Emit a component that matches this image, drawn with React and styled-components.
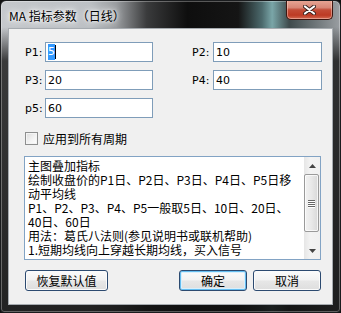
import styled, { createGlobalStyle } from "styled-components";

const cjk = `"Noto Sans CJK SC", "DejaVu Sans", sans-serif`;
const latin = `"DejaVu Sans", "Noto Sans CJK SC", sans-serif`;

const GlobalStyle = createGlobalStyle`
  html, body {
    margin: 0;
    padding: 0;
    background: #111;
  }
  * {
    box-sizing: border-box;
  }
`;

// Aero glass frame
const Window = styled.div`
  width: 341px;
  height: 313px;
  display: flex;
  flex-direction: column;
  padding: 0 7px 7px 7px;
  border: 1px solid #1a1c1e;
  border-radius: 6px 6px 4px 4px;
  box-shadow: inset 0 0 0 1px rgba(255, 255, 255, 0.3);
  background:
    linear-gradient(180deg, rgba(0, 0, 0, 0) 0, rgba(0, 0, 0, 0) 26px, rgba(22, 22, 22, 0.8) 60px, rgba(16, 16, 16, 0.9) 100%),
    linear-gradient(90deg, #c5c8cc 0%, #bcc0c4 26%, #9a9da0 34%, #3a3b3c 43%, #0e0e0e 55%, #151515 70%, #4c6a6d 77%, #7aa6a8 80%, #3e4a4c 85%, #9a9ea2 100%);
  overflow: hidden;
`;

const TitleBar = styled.div`
  height: 28px;
  flex: none;
  display: flex;
  align-items: flex-start;
  justify-content: space-between;
  margin-top: -1px;
`;

const Title = styled.div`
  padding: 8px 0 0 1px;
  font-family: ${cjk};
  font-size: 12px;
  line-height: 15px;
  color: #000;
  text-shadow: 0 0 6px #fff, 0 0 3px #fff, 0 0 10px rgba(255, 255, 255, 0.9);
`;

const CloseButton = styled.div`
  width: 47px;
  height: 20px;
  display: flex;
  align-items: center;
  justify-content: center;
  border: 1px solid #3e1610;
  border-top: none;
  border-radius: 0 0 5px 5px;
  background: linear-gradient(180deg, #e9a898 0%, #d88776 40%, #c34c37 52%, #bd3a24 80%, #d36a52 100%);
  box-shadow: inset 0 0 0 1px rgba(255, 220, 210, 0.45);
`;

const Client = styled.div`
  flex: 1;
  display: flex;
  flex-direction: column;
  background: #f0f0f0;
  border: 1px solid #a6abb0;
  padding: 13px 0 0 16px;
  font-family: ${cjk};
  font-size: 12px;
  color: #000;
`;

const Fields = styled.div`
  display: grid;
  grid-template-columns: 167px 130px;
  row-gap: 8px;
`;

const Field = styled.div`
  display: flex;
  align-items: center;
`;

const Label = styled.label`
  width: ${(p) => p.$w}px;
  flex: none;
  font-family: ${latin};
  font-size: 11px;
`;

const Input = styled.div`
  width: ${(p) => p.$w}px;
  height: 20px;
  display: flex;
  align-items: center;
  padding-left: 2px;
  background: #fff;
  border: 1px solid #7f9db9;
  font-family: ${latin};
  font-size: 11px;
`;

const Selected = styled.span`
  background: #3399ff;
  color: #fff;
  padding: 1px 0;
  line-height: 14px;
`;

const Caret = styled.span`
  width: 1px;
  height: 14px;
  background: #000;
`;

const CheckRow = styled.div`
  display: flex;
  align-items: center;
  gap: 5px;
  margin-top: 13px;
  height: 14px;
`;

const Checkbox = styled.span`
  width: 13px;
  height: 13px;
  border: 1px solid #8e8f8f;
  background: linear-gradient(135deg, #dcdcdc 0%, #f4f4f4 60%, #fff 100%);
  box-shadow: inset 0 0 0 1px #f4f4f4;
`;

const Memo = styled.div`
  margin: 11px 0 0 -1px;
  width: 297px;
  height: 104px;
  display: flex;
  background: #fff;
  border: 1px solid #82a3c4;
`;

const MemoText = styled.div`
  flex: 1;
  padding: 2px 0 0 3px;
  line-height: 14px;
  white-space: nowrap;
  overflow: hidden;
`;

const ScrollBar = styled.div`
  width: 16px;
  flex: none;
  display: flex;
  flex-direction: column;
  background: linear-gradient(90deg, #e6e6e6, #f3f3f3 40%, #f0f0f0);
`;

const Arrow = styled.div`
  height: 17px;
  flex: none;
  display: flex;
  align-items: center;
  justify-content: center;
`;

const Thumb = styled.div`
  margin: 0 1px 0 0;
  height: 58px;
  display: flex;
  flex-direction: column;
  align-items: center;
  justify-content: center;
  gap: 1px;
  border: 1px solid #9a9a9a;
  border-radius: 2px;
  background: linear-gradient(90deg, #f2f2f2 0%, #e8e8e8 50%, #d8d8d8 100%);
  box-shadow: inset 0 0 0 1px rgba(255, 255, 255, 0.7);
`;

const Grip = styled.span`
  width: 7px;
  height: 1px;
  background: #666;
  box-shadow: 0 1px 0 #fff;
`;

const Track = styled.div`
  flex: 1;
`;

const ButtonRow = styled.div`
  display: flex;
  justify-content: space-between;
  width: 296px;
  margin-top: 10px;
`;

const ButtonGroup = styled.div`
  display: flex;
  gap: 6px;
`;

const Button = styled.button`
  width: ${(p) => p.$w}px;
  height: 21px;
  padding: 0;
  border: 1px solid #2c4a70;
  border-radius: 3px;
  background: linear-gradient(180deg, #fbfbfb 0%, #f2f2f2 48%, #e7e7e7 52%, #dedede 100%);
  box-shadow: ${(p) =>
    p.$default ? "inset 0 0 0 1px #64bdf0, inset 0 0 0 2px #d9effb" : "inset 0 0 0 1px #fbfbfb"};
  font-family: ${cjk};
  font-size: 12px;
  line-height: 19px;
  color: #000;
`;

const ArrowIcon = ({ down }) => (
  <svg width="7" height="4" viewBox="0 0 7 4">
    <path d={down ? "M0 0H7L3.5 4Z" : "M0 4H7L3.5 0Z"} fill="#444" />
  </svg>
);

const lines = [
  "主图叠加指标",
  "绘制收盘价的P1日、P2日、P3日、P4日、P5日移",
  "动平均线",
  "P1、P2、P3、P4、P5一般取5日、10日、20日、",
  "40日、60日",
  "用法：葛氏八法则(参见说明书或联机帮助)",
  "1.短期均线向上穿越长期均线，买入信号",
];

export default function App() {
  return (
    <>
      <GlobalStyle />
      <Window>
        <TitleBar>
          <Title>MA 指标参数（日线）</Title>
          <CloseButton>
            <svg width="13" height="10" viewBox="0 0 13 10">
              <path d="M2 1.5L11 8.5M11 1.5L2 8.5" stroke="#3b2420" strokeWidth="4" strokeLinecap="round" />
              <path d="M2 1.5L11 8.5M11 1.5L2 8.5" stroke="#fff" strokeWidth="2.2" strokeLinecap="round" />
            </svg>
          </CloseButton>
        </TitleBar>
        <Client>
          <Fields>
            <Field>
              <Label $w={20}>P1:</Label>
              <Input $w={108}>
                <Selected>5</Selected>
                <Caret />
              </Input>
            </Field>
            <Field>
              <Label $w={21}>P2:</Label>
              <Input $w={109}>10</Input>
            </Field>
            <Field>
              <Label $w={20}>P3:</Label>
              <Input $w={108}>20</Input>
            </Field>
            <Field>
              <Label $w={21}>P4:</Label>
              <Input $w={109}>40</Input>
            </Field>
            <Field>
              <Label $w={20}>p5:</Label>
              <Input $w={108}>60</Input>
            </Field>
          </Fields>
          <CheckRow>
            <Checkbox />
            <span>应用到所有周期</span>
          </CheckRow>
          <Memo>
            <MemoText>
              {lines.map((l) => (
                <div key={l}>{l}</div>
              ))}
            </MemoText>
            <ScrollBar>
              <Arrow>
                <ArrowIcon />
              </Arrow>
              <Thumb>
                <Grip />
                <Grip />
                <Grip />
                <Grip />
              </Thumb>
              <Track />
              <Arrow>
                <ArrowIcon down />
              </Arrow>
            </ScrollBar>
          </Memo>
          <ButtonRow>
            <Button $w={83}>恢复默认值</Button>
            <ButtonGroup>
              <Button $w={68} $default>
                确定
              </Button>
              <Button $w={68}>取消</Button>
            </ButtonGroup>
          </ButtonRow>
        </Client>
      </Window>
    </>
  );
}
